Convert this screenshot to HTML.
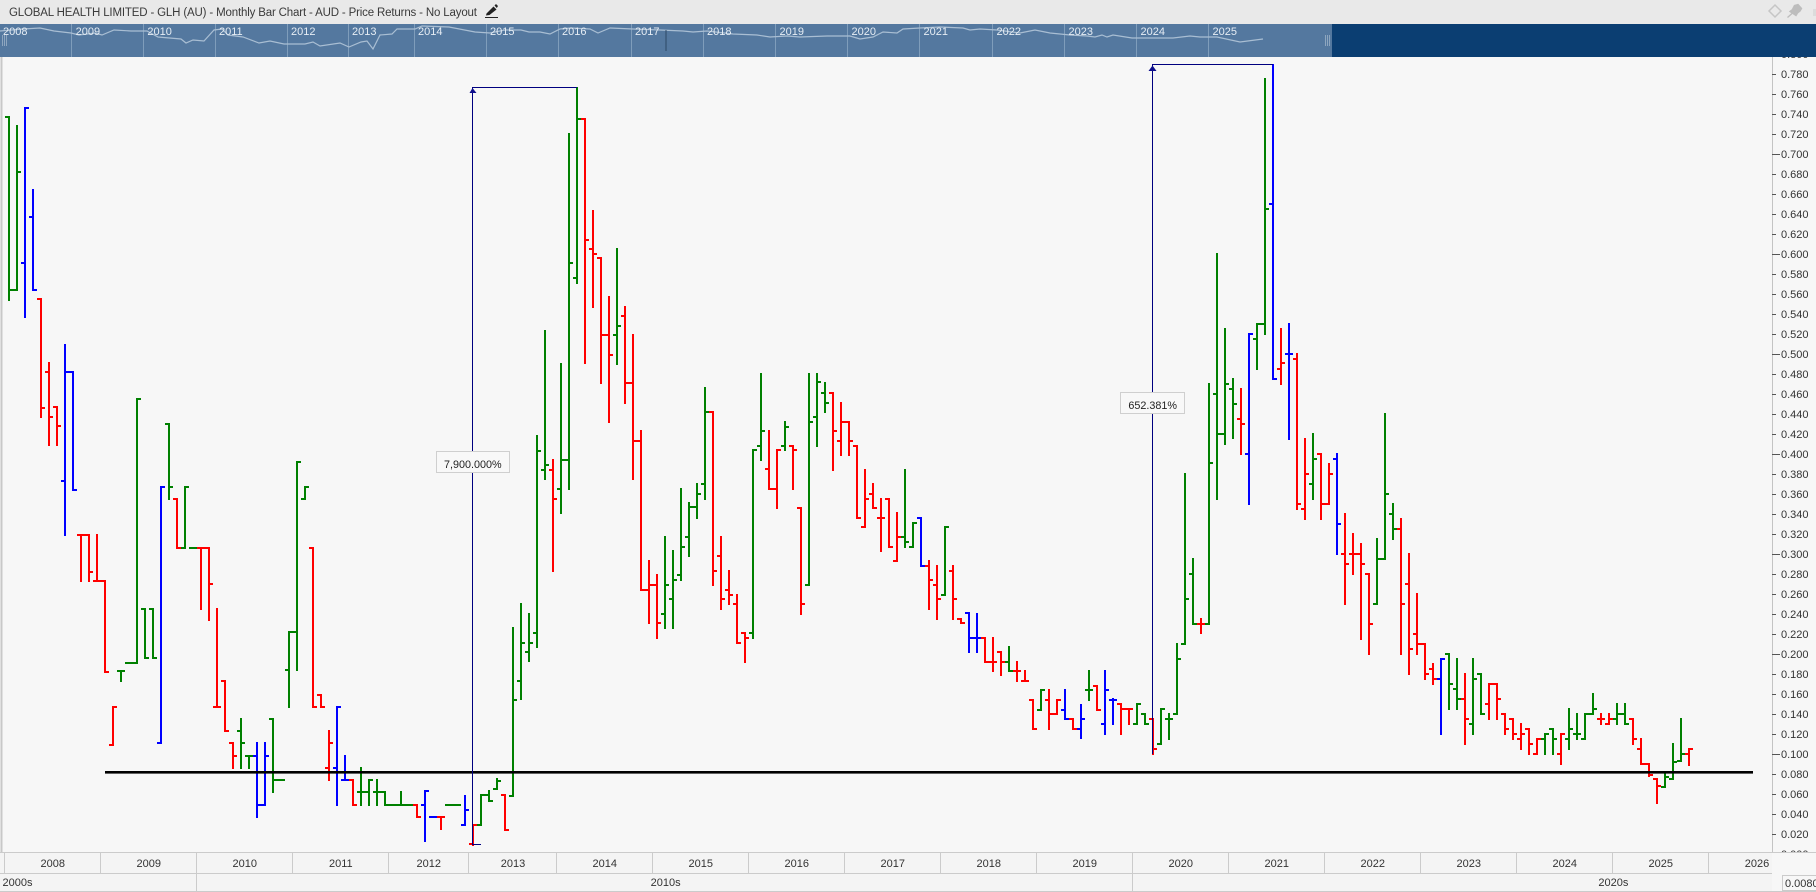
<!DOCTYPE html>
<html lang="en"><head><meta charset="utf-8"><title>Global Health Limited - GLH (AU) - Monthly Bar Chart</title>
<style>
html,body{margin:0;padding:0;background:#f7f7f7;width:1816px;height:892px;overflow:hidden}
svg{display:block}
text{font-family:"Liberation Sans",sans-serif;font-size:11px;fill:#333}
.n text{fill:#e6edf4}
.c{text-anchor:middle}
</style></head><body>
<svg width="1816" height="892" viewBox="0 0 1816 892" xmlns="http://www.w3.org/2000/svg">
<rect width="1816" height="892" fill="#f7f7f7"/>
<!-- price axis -->
<g>
<path d="M1772.5 50V853" stroke="#c4c4c4" stroke-width="1" fill="none"/>
<path d="M1772 54h8M1772 74h4M1772 94h4M1772 114h4M1772 134h4M1772 154h8M1772 174h4M1772 194h4M1772 214h4M1772 234h4M1772 254h8M1772 274h4M1772 294h4M1772 314h4M1772 334h4M1772 354h8M1772 374h4M1772 394h4M1772 414h4M1772 434h4M1772 454h8M1772 474h4M1772 494h4M1772 514h4M1772 534h4M1772 554h8M1772 574h4M1772 594h4M1772 614h4M1772 634h4M1772 654h8M1772 674h4M1772 694h4M1772 714h4M1772 734h4M1772 754h8M1772 774h4M1772 794h4M1772 814h4M1772 834h4" transform="translate(0,.5)" stroke="#555" stroke-width="1" fill="none"/>
<text x="1781" y="58">0.800</text><text x="1781" y="78">0.780</text><text x="1781" y="98">0.760</text><text x="1781" y="118">0.740</text><text x="1781" y="138">0.720</text><text x="1781" y="158">0.700</text><text x="1781" y="178">0.680</text><text x="1781" y="198">0.660</text><text x="1781" y="218">0.640</text><text x="1781" y="238">0.620</text><text x="1781" y="258">0.600</text><text x="1781" y="278">0.580</text><text x="1781" y="298">0.560</text><text x="1781" y="318">0.540</text><text x="1781" y="338">0.520</text><text x="1781" y="358">0.500</text><text x="1781" y="378">0.480</text><text x="1781" y="398">0.460</text><text x="1781" y="418">0.440</text><text x="1781" y="438">0.420</text><text x="1781" y="458">0.400</text><text x="1781" y="478">0.380</text><text x="1781" y="498">0.360</text><text x="1781" y="518">0.340</text><text x="1781" y="538">0.320</text><text x="1781" y="558">0.300</text><text x="1781" y="578">0.280</text><text x="1781" y="598">0.260</text><text x="1781" y="618">0.240</text><text x="1781" y="638">0.220</text><text x="1781" y="658">0.200</text><text x="1781" y="678">0.180</text><text x="1781" y="698">0.160</text><text x="1781" y="718">0.140</text><text x="1781" y="738">0.120</text><text x="1781" y="758">0.100</text><text x="1781" y="778">0.080</text><text x="1781" y="798">0.060</text><text x="1781" y="818">0.040</text><text x="1781" y="838">0.020</text><text x="1781" y="858">0.000</text>
</g>
<path d="M1.5 57V853" stroke="#c8c8c8" stroke-width="2" fill="none"/>
<!-- bars -->
<g fill="none" stroke-width="2" shape-rendering="crispEdges">
<path stroke="#008000" d="M9 116V301M5 117h4M9 290h4M17 125V291M13 290h4M17 172h4M121 670V682M117 671h8M125 663h8M137 398V664M133 663h4M137 399h4M145 608V659M141 609h4M145 658h4M153 608V659M149 609h4M153 658h4M169 423V500M165 424h4M169 487h4M185 486V549M181 548h4M185 487h4M189 548h8M241 718V769M237 731h4M241 743h4M249 755V769M245 756h8M273 718V793M269 719h4M273 780h4M277 780h8M289 631V708M285 670h4M289 632h4M297 461V671M293 632h4M297 462h4M305 486V500M301 499h4M305 487h4M361 767V806M357 792h8M369 779V806M365 792h4M369 780h4M377 779V806M373 792h8M385 791V806M381 792h4M385 805h4M389 805h8M401 791V806M397 805h8M405 805h8M445 805h8M453 805h8M481 794V826M477 825h4M481 795h4M489 790V802M485 795h4M489 801h4M497 778V790M493 789h4M497 781h4M513 627V797M509 796h4M513 700h4M521 603V700M517 681h4M521 643h4M529 613V662M525 652h4M529 643h4M537 435V648M533 633h4M537 451h4M545 330V480M541 470h4M545 465h4M561 363V514M557 489h4M561 460h4M569 133V490M565 460h4M569 263h4M577 87V284M573 278h4M577 119h4M617 248V365M613 335h4M617 326h4M665 536V629M661 614h4M665 585h4M673 550V629M669 599h4M673 580h4M681 488V581M677 575h4M681 547h4M689 502V557M685 537h4M689 507h4M697 483V519M693 507h4M697 494h4M705 387V500M701 484h4M705 412h4M753 449V639M749 633h4M753 450h4M761 373V461M757 446h4M761 431h4M785 421V451M781 446h4M785 427h4M809 373V586M805 585h4M809 422h4M817 373V447M813 417h4M817 382h4M825 382V413M821 393h4M825 403h4M905 469V548M901 537h4M905 542h4M913 522V548M909 547h4M913 523h4M945 526V596M941 595h4M945 527h4M1009 646V672M1005 662h4M1009 671h4M1041 689V711M1037 710h4M1041 690h4M1089 670V701M1085 690h8M1137 703V725M1133 724h4M1137 704h4M1145 713V725M1141 714h4M1145 724h4M1161 708V745M1157 744h4M1161 709h4M1169 713V740M1165 719h8M1177 643V715M1173 714h4M1177 659h4M1185 473V645M1181 644h4M1185 599h4M1193 558V625M1189 574h4M1193 624h4M1209 383V625M1205 624h4M1209 463h4M1217 253V500M1213 394h4M1217 434h4M1225 328V445M1221 434h4M1225 384h4M1233 378V439M1229 389h4M1233 404h4M1257 323V370M1253 339h4M1257 324h4M1265 78V335M1261 324h4M1265 209h4M1313 433V500M1309 484h4M1313 459h4M1377 538V605M1373 604h4M1377 559h4M1385 413V560M1381 559h4M1385 494h4M1393 503V540M1389 514h4M1393 529h4M1449 653V710M1445 654h4M1449 684h4M1457 658V710M1453 689h4M1457 699h4M1473 658V735M1469 724h4M1473 679h4M1481 673V715M1477 674h4M1481 714h4M1545 733V755M1541 739h4M1545 734h4M1553 728V755M1549 729h4M1553 739h4M1569 708V750M1565 739h4M1569 729h4M1577 713V740M1573 734h8M1585 713V740M1581 739h4M1585 714h4M1593 693V715M1589 714h4M1593 709h4M1617 703V725M1613 719h4M1617 714h4M1625 703V725M1621 714h4M1625 724h4M1665 773V788M1661 787h4M1665 777h4M1673 743V780M1669 779h4M1673 762h4M1681 718V762M1677 761h4M1681 754h4"/>
<path stroke="#ff0000" d="M41 298V418M37 299h4M41 408h4M49 362V446M45 372h4M49 417h4M57 406V446M53 407h4M57 426h4M81 534V582M77 535h8M89 534V582M85 535h4M89 572h4M97 534V582M93 581h8M105 580V673M101 581h4M105 672h4M113 706V746M109 745h4M113 707h4M177 498V549M173 499h4M177 548h4M201 547V610M197 548h8M209 547V621M205 548h4M209 584h4M217 608V708M213 707h8M225 680V732M221 681h4M225 731h4M233 742V769M229 743h4M233 756h4M313 547V708M309 548h4M313 707h4M321 694V708M317 695h4M321 707h4M329 730V781M325 768h4M329 743h4M353 779V806M349 780h4M353 805h4M417 804V818M413 805h4M417 817h4M441 816V830M437 817h8M473 824V846M469 844h4M473 825h4M505 794V831M501 795h4M505 830h4M553 459V572M549 470h4M553 499h4M585 118V364M581 119h4M585 240h4M593 210V308M589 249h4M593 254h4M601 257V384M597 258h4M601 335h4M609 296V423M605 335h4M609 355h4M625 306V404M621 316h4M625 383h4M633 334V480M629 383h4M633 441h4M641 430V591M637 441h4M641 590h4M649 560V624M645 590h4M649 585h4M657 574V639M653 585h4M657 623h4M713 411V586M709 412h4M713 571h4M721 536V610M717 556h4M721 599h4M729 570V605M725 590h4M729 595h4M737 594V644M733 604h4M737 643h4M745 632V663M741 633h4M745 638h4M769 430V490M765 469h4M769 489h4M777 449V509M773 489h4M777 450h4M793 445V490M789 446h4M793 450h4M801 507V615M797 508h4M801 604h4M833 392V471M829 393h4M833 431h4M841 402V456M837 441h4M841 422h4M849 421V456M845 422h4M849 441h4M857 445V519M853 446h4M857 518h4M865 469V528M861 527h4M865 499h4M873 483V509M869 494h4M873 508h4M881 498V552M877 518h8M889 498V548M885 499h4M889 547h4M897 512V562M893 561h4M897 537h4M929 560V610M925 566h4M929 580h4M937 565V620M933 585h4M937 599h4M953 565V620M949 571h4M953 599h4M961 618V624M957 619h4M961 623h4M985 637V663M981 638h4M985 662h4M993 637V672M989 662h8M1001 651V676M997 652h4M1001 662h4M1017 661V682M1013 671h8M1025 670V682M1021 681h8M1033 699V730M1029 700h4M1033 729h4M1049 689V730M1045 700h4M1049 714h4M1057 699V715M1053 714h4M1057 700h4M1073 718V730M1069 719h4M1073 729h4M1097 685V711M1093 686h4M1097 710h4M1121 703V735M1117 704h4M1121 709h4M1129 708V725M1125 709h8M1153 718V755M1149 719h4M1153 749h4M1201 618V634M1197 624h8M1241 388V455M1237 419h4M1241 424h4M1281 328V385M1277 369h4M1281 363h4M1297 353V510M1293 359h4M1297 504h4M1305 438V520M1301 509h4M1305 474h4M1321 453V520M1317 454h4M1321 504h4M1329 463V505M1325 504h4M1329 474h4M1345 513V605M1341 554h4M1345 564h4M1353 533V575M1349 554h8M1361 543V640M1357 554h4M1361 564h4M1369 573V655M1365 574h4M1369 624h4M1401 518V655M1397 529h4M1401 604h4M1409 553V675M1405 584h4M1409 649h4M1417 593V655M1413 634h4M1417 644h4M1425 643V680M1421 644h4M1425 674h4M1433 663V685M1429 669h4M1433 679h4M1465 673V745M1461 699h4M1465 719h4M1489 683V720M1485 704h4M1489 684h4M1497 683V720M1493 684h4M1497 699h4M1505 713V735M1501 714h4M1505 729h4M1513 718V740M1509 719h4M1513 734h4M1521 723V750M1517 739h4M1521 734h4M1529 728V755M1525 729h4M1529 744h4M1537 738V755M1533 754h4M1537 739h4M1561 733V765M1557 754h4M1561 734h4M1601 713V725M1597 719h8M1609 713V725M1605 724h4M1609 719h4M1633 718V745M1629 719h4M1633 739h4M1641 738V765M1637 749h4M1641 764h4M1649 763V777M1645 764h4M1649 775h4M1657 778V804M1653 779h4M1657 786h4M1689 748V766M1685 754h4M1689 749h4"/>
<path stroke="#0000ff" d="M25 107V318M21 263h4M25 108h4M33 189V291M29 217h4M33 290h4M65 344V536M61 481h4M65 372h4M73 371V491M69 372h4M73 490h4M161 486V744M157 743h4M161 487h4M257 742V818M253 756h4M257 805h4M265 742V806M261 805h4M265 756h4M337 706V806M333 768h4M337 707h4M345 755V781M341 780h8M425 790V842M421 805h4M425 791h4M429 817h8M465 795V826M461 825h4M465 810h4M921 517V567M917 518h4M921 566h4M969 612V653M965 613h4M969 638h4M977 613V653M973 638h8M1065 689V720M1061 710h4M1065 719h4M1081 704V739M1077 729h4M1081 719h4M1105 670V735M1101 724h4M1105 690h4M1113 698V725M1109 700h8M1249 333V505M1245 454h4M1249 334h4M1273 64V380M1269 204h4M1273 379h4M1289 323V440M1285 354h8M1337 453V555M1333 459h4M1337 524h4M1441 658V735M1437 679h4M1441 659h4"/>
</g>
<!-- horizontal support line -->
<rect x="105" y="771" width="1648" height="2.6" fill="#000"/>
<!-- measuring lines -->
<g fill="none" stroke="#000080" stroke-width="1" shape-rendering="crispEdges">
<path d="M472.5 845V87.5H577M473 844.5H481"/>
<path d="M1152.5 754V64.5H1273"/>
</g>
<path d="M472.5 88L476.5 93H469.5ZM1152.5 65.5L1156.5 71H1148.5Z" fill="#0e0e8c"/>
<!-- labels -->
<rect x="436.5" y="451.5" width="73" height="21" fill="#f8f8f8" stroke="#cfcfcf"/>
<text class="c" x="472.8" y="468" style="font-size:10.8px;fill:#222">7,900.000%</text>
<rect x="1120.5" y="392.5" width="64" height="21" fill="#f8f8f8" stroke="#cfcfcf"/>
<text class="c" x="1152.7" y="409" style="font-size:10.8px;fill:#222">652.381%</text>
<!-- header -->
<rect width="1816" height="24" fill="#e9e9e9"/>
<text x="9" y="16" textLength="468" lengthAdjust="spacing" style="font-size:11.5px;fill:#3a3a3a">GLOBAL HEALTH LIMITED - GLH (AU) - Monthly Bar Chart - AUD - Price Returns - No Layout</text>
<path d="M486.5 13.5L493.5 6.5L496.5 9.5L489.5 15L486 15.5Z" fill="#222"/><path d="M494.5 5.5L496 4L498 6L496.8 8Z" fill="#222"/>
<path d="M485 17.5H498" stroke="#222" stroke-width="1" fill="none"/>
<path d="M1775 5L1781 11L1775 17L1769 11Z" fill="none" stroke="#c6c6c6" stroke-width="1.5"/>
<path d="M1794.5 5.5L1798 4.5L1801.5 8.5L1800 11L1797.5 13L1796 15.5L1790 11.5L1792.5 9.5ZM1792 13.5L1787.5 17.5" fill="#bdbdbd" stroke="#bdbdbd" stroke-width="1.4"/>
<rect x="1813" y="9" width="3" height="7" fill="#dcdcdc"/>
<!-- navigator -->
<rect y="24" width="1816" height="33" fill="#0b3e72"/>
<rect y="24" width="1332" height="33" fill="#54789f"/>
<g stroke="#7f9dbb" stroke-width="1" fill="none">
<path d="M71.5 24V57M143.5 24V57M215.5 24V57M287.5 24V57M348.5 24V57M414.5 24V57M486.5 24V57M558.5 24V57M631.5 24V57M703.5 24V57M775.5 24V57M847.5 24V57M919.5 24V57M992.5 24V57M1064.5 24V57M1136.5 24V57M1208.5 24V57"/>
</g>
<path d="M0 31L23 29L40 28L54 31L71 33L79 35L95 33L102 35L114 30L131 31L147 31L158 37L181 39L186 43L193 40L204 41L214 30L222 29L228 35L243 37L259 43L270 41L284 44L305 44L313 42L320 46L340 43L349 47L361 42L367 41L373 49L380 35L392 34L397 29L415 29L422 26L449 27L475 32L490 33L505 30L521 30L529 32L540 32L550 34L560 29L571 28L590 29L598 33L610 28L633 29L660 30L683 31L693 32L707 31L733 34L757 35L770 37L787 36L800 37L827 36L850 36L860 39L873 37L883 32L897 33L903 29L920 28L940 27L963 28L970 30L980 29L997 30L1020 33L1035 30L1050 33L1070 35L1087 36L1095 37L1102 35L1107 37L1113 35L1132 38L1173 38L1190 36L1200 37L1217 37L1240 42L1263 39" fill="none" stroke="#a9bed3" stroke-width="1.2"/>
<path d="M666 30V51" stroke="#2b4766" stroke-width="1" fill="none"/>
<path d="M2.5 35V46M4.5 35V46M6.5 35V46M1325.5 35V46M1327.5 35V46M1329.5 35V46" stroke="#8ea6bf" stroke-width="1" fill="none"/>
<g class="n">
<text x="3" y="35">2008</text><text x="75.6" y="35">2009</text><text x="147.4" y="35">2010</text><text x="219" y="35">2011</text><text x="291" y="35">2012</text><text x="352" y="35">2013</text><text x="418" y="35">2014</text><text x="490" y="35">2015</text><text x="562" y="35">2016</text><text x="635" y="35">2017</text><text x="707" y="35">2018</text><text x="779.5" y="35">2019</text><text x="851.5" y="35">2020</text><text x="923.5" y="35">2021</text><text x="996.5" y="35">2022</text><text x="1068.5" y="35">2023</text><text x="1140.5" y="35">2024</text><text x="1212.5" y="35">2025</text>
</g>
<!-- time axis -->
<rect y="853" width="1816" height="39" fill="#f7f7f7"/>
<rect y="853" width="1772" height="38" fill="#f4f4f4"/>
<g stroke="#cbcbcb" stroke-width="1" fill="none">
<path d="M0 852.5H1816M0 873.5H1772M0 891.5H1816"/>
<path d="M4.5 853V873M100.5 853V873M196.5 853V891M292.5 853V873M388.5 853V873M468.5 853V873M556.5 853V873M652.5 853V873M748.5 853V873M844.5 853V873M940.5 853V873M1036.5 853V873M1132.5 853V891M1228.5 853V873M1324.5 853V873M1420.5 853V873M1516.5 853V873M1612.5 853V873M1708.5 853V873"/>
</g>
<text class="c" x="52.8" y="867">2008</text><text class="c" x="148.8" y="867">2009</text><text class="c" x="244.8" y="867">2010</text><text class="c" x="340.8" y="867">2011</text><text class="c" x="428.8" y="867">2012</text><text class="c" x="513" y="867">2013</text><text class="c" x="604.8" y="867">2014</text><text class="c" x="700.8" y="867">2015</text><text class="c" x="796.8" y="867">2016</text><text class="c" x="892.8" y="867">2017</text><text class="c" x="988.8" y="867">2018</text><text class="c" x="1084.8" y="867">2019</text><text class="c" x="1180.8" y="867">2020</text><text class="c" x="1276.8" y="867">2021</text><text class="c" x="1372.8" y="867">2022</text><text class="c" x="1468.8" y="867">2023</text><text class="c" x="1564.8" y="867">2024</text><text class="c" x="1660.8" y="867">2025</text><text class="c" x="1757" y="867">2026</text>
<text x="2.5" y="886">2000s</text><text class="c" x="665.6" y="886">2010s</text><text class="c" x="1613.4" y="886">2020s</text>
<rect x="1782.5" y="875.5" width="40" height="15" fill="#f7f7f7" stroke="#cbcbcb"/>
<text x="1785" y="887">0.0080</text>
</svg>
</body></html>
